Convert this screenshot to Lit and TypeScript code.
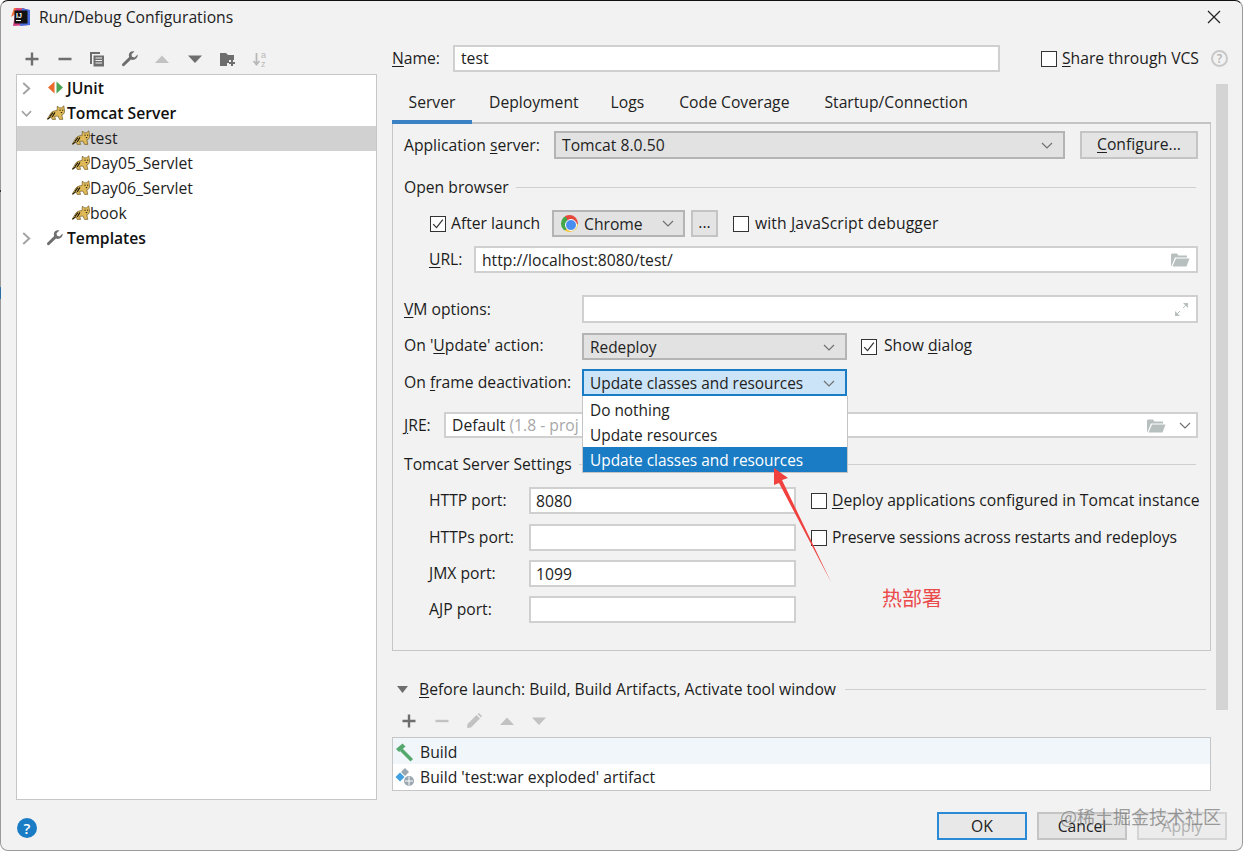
import { LitElement, html, css } from "lit";
import { customElement } from "lit/decorators.js";

const plus = (c: string) => html`<svg class="i16" viewBox="0 0 16 16"><path d="M8 1.5v13M1.5 8h13" stroke=${c} stroke-width="2.4" fill="none"/></svg>`;
const minus = (c: string) => html`<svg class="i16" viewBox="0 0 16 16"><path d="M1.5 8h13" stroke=${c} stroke-width="2.4" fill="none"/></svg>`;
const up = (c: string) => html`<svg class="i16" viewBox="0 0 16 16"><path d="M1 12 8 4.5 15 12Z" fill=${c}/></svg>`;
const down = (c: string) => html`<svg class="i16" viewBox="0 0 16 16"><path d="M1 4.5 8 12 15 4.5Z" fill=${c}/></svg>`;
const wrench = (c: string) => html`<svg class="i16" viewBox="0 0 16 16"><path d="M15.6 3.6 12.6 6.4 10 5.8 9.5 3.2 12.4.6C10 -.4 6.9 1 6.8 4c0 .8.1 1.5.4 2L.6 12.4c-.8.9-.8 1.6-.2 2.3.7.7 1.5.7 2.3-.1L9 8.6c3.5 1.2 7.2-1.4 6.6-5Z" fill=${c}/></svg>`;
const chev = html`<svg class="chev" viewBox="0 0 12 7"><path d="M1 1 6 6 11 1" stroke="#707070" stroke-width="1.2" fill="none"/></svg>`;
const folder = html`<svg class="folder" viewBox="0 0 20 15"><path d="M1 14V2.5L2 1.5H7L8.5 3.5H17V5.5H5L1.5 14Z M2.5 14.5 6 6.5H19.5L16.5 14.5Z" fill="#b8bfbf"/></svg>`;
const check = (on: boolean) => html`<span class="cb">${on ? html`<svg viewBox="0 0 16 16"><path d="M2.5 8.2 6.3 12.2 13.5 3" stroke="#333" stroke-width="1.4" fill="none"/></svg>` : ""}</span>`;
const cat = html`<svg class="cat" viewBox="0 0 18 15">
  <path d="M10.4 1 12.2 2.8H14.6L16.8 .8 17.6 6C17.6 8.8 16 9.6 14.8 9.8L15.8 14.4H12.6L10.8 11 7.6 11.4 8.6 14.4H5.2L4 11.8 0 14.6 3 9.4C4.4 6.6 7.2 5.6 10 5.6Z" fill="#e0ba58" stroke="#5a4618" stroke-width=".6"/>
  <path d="M3 11.4 6 7.6M5.2 12 8 7.4M.8 14.2 3.4 11.8" stroke="#1d1809" stroke-width="1.1" fill="none"/>
  <path d="M12.4 5.2h1.3M15 5.2h1.2M13.8 7.6h1.4" stroke="#1d1809" stroke-width="1"/>
</svg>`;
const treeChevR = html`<svg class="tc" viewBox="0 0 10 12"><path d="M2 1 7.5 6 2 11" stroke="#a3a3a3" stroke-width="1.8" fill="none"/></svg>`;
const treeChevD = html`<svg class="tc" viewBox="0 0 12 10"><path d="M1 2.5 6 7.5 11 2.5" stroke="#a3a3a3" stroke-width="1.8" fill="none"/></svg>`;

@customElement("app-root")
export class AppRoot extends LitElement {
  static styles = css`
    :host { display: block; width: 1244px; height: 852px; background: #fff; overflow: hidden; position: relative;
      font-family: "Open Sans", "Noto Sans CJK SC", sans-serif; font-size: 15.7px; color: #1c1c1c; }
    * { box-sizing: border-box; }
    u { text-underline-offset: 2px; text-decoration-thickness: 1px; }
    .dialog { position: relative; width: 1243px; height: 851px; background: #f2f2f2;
      border: 1px solid #9a9a9a; border-top: 1px solid #111; border-radius: 8px; display: flex; flex-direction: column; overflow: hidden; }
    .title { height: 33px; flex: none; display: flex; align-items: center; padding: 0 21px 2px 9px; gap: 8px; color: #222; }
    .title .t { flex: 1; }
    .logo { width: 21px; height: 20px; flex: none; }
    .close { width: 14px; height: 14px; flex: none; }
    .body { flex: 1; display: flex; padding-left: 15px; }
    .left { width: 361px; flex: none; display: flex; flex-direction: column; padding-top: 10px; }
    .tb { height: 30px; flex: none; display: flex; align-items: center; padding-left: 8px; }
    .tb > span { width: 32.6px; display: flex; justify-content: flex-start; }
    .i16 { width: 16px; height: 16px; display: block; }
    .tree { height: 726px; flex: none; background: #fff; border: 1px solid #c6c6c6; padding-top: 1px; }
    .node { height: 25px; display: flex; align-items: center; position: relative; padding-left: 50px; padding-bottom: 2px; font-weight: 600; color: #111; }
    .node.child { padding-left: 55px; font-weight: 400; color: #222; }
    .node.sel { background: #d1d1d1; }
    .tc { position: absolute; left: 4px; top: 6px; width: 11px; height: 13px; }
    .cat { width: 18px; height: 15px; flex: none; }
    .node .lead { width: 18px; height: 15px; flex: none; margin-right: 2px; margin-left: -20px; }
    .node.top .cat { margin-left: -20px; margin-right: 2px; }
    .help { width: 20px; height: 20px; border-radius: 50%; background: #1a7cc4; color: #fff; display: flex; align-items: center; justify-content: center;
      font-size: 15px; font-weight: 600; margin: 18px 0 0 1px; }
    .right { margin-left: 15px; width: 836px; flex: none; display: flex; flex-direction: column; padding-top: 11px; }
    .namerow { height: 27px; display: flex; align-items: center; flex: none; }
    .namerow .lb { width: 61px; flex: none; padding-bottom: 2px; }
    .namerow .input { width: 547px; flex: none; padding-bottom: 1px; }
    .share { display: flex; align-items: center; margin-left: 41px; gap: 5px; white-space: nowrap; }
    .share > span:last-child { padding-bottom: 2px; }
    .q { width: 17px; height: 17px; margin-left: 12px; flex: none; border: 2px solid #c8c8c8; border-radius: 50%; color: #b4b4b4; font-size: 12px; font-weight: 600; display: flex; align-items: center; justify-content: center; }
    .main { margin-top: 12px; display: grid; grid-template-columns: 819px 12px; column-gap: 5px; align-items: start; }
    .scroll { grid-column: 2; grid-row: 1; height: 626px; background: #d4d4d4; }
    .content { grid-column: 1; grid-row: 1; display: flex; flex-direction: column; }
    .tabs { height: 40px; display: flex; border-bottom: 2px solid #c4c4c4; }
    .tab { display: flex; align-items: center; height: 36px; padding: 0 16px; color: #222; white-space: nowrap; }
    .tab.on { width: 80px; justify-content: center; padding: 0; height: 40px; border-bottom: 4px solid #3a82c4; }
    .tab.first { padding-left: 17px; }
    .tab.wide { padding-right: 19px; }
    .panel { height: 527px; border: 1px solid #c6c6c6; border-top: 0; padding: 7px 12px 0 11px; display: flex; flex-direction: column; }
    .row { display: flex; align-items: center; flex: none; height: 27px; white-space: nowrap; }
    .r1 { height: 28px; }
    .r2, .r9 { height: 22px; }
    .r2 { margin-top: 17px; } .r3 { margin-top: 12px; padding-left: 26px; }
    .r4 { margin-top: 9px; padding-left: 25px; } .r5 { margin-top: 22px; height: 28px; }
    .r6 { margin-top: 10px; } .r7 { margin-top: 9px; } .r8 { margin-top: 16px; height: 26px; }
    .r9 { margin-top: 15px; } .r10 { margin-top: 12px; padding-left: 25px; }
    .r11 { margin-top: 10px; padding-left: 25px; } .r12, .r13 { margin-top: 9px; padding-left: 25px; }
    .lb1 { width: 150px; flex: none; } .lb4 { width: 45px; flex: none; padding-bottom: 1px; } .lb5 { width: 178px; flex: none; padding-bottom: 1px; } .lb8 { width: 40px; flex: none; } .lb10 { width: 100px; flex: none; padding-bottom: 1px; }
    .r6 .lb5 { padding-bottom: 3px; }
    .input { height: 100%; background: #fff; border: 2px solid #d0d0d0; display: flex; align-items: center; padding: 0 6px; color: #222; flex: 1; min-width: 0; justify-content: space-between; }
    .input.w { flex: none; width: 267px; padding-left: 5px; }
    .muted { color: #a8a8a8; }
    .combo { height: 100%; background: #e2e2e2; border: 2px solid #b4b4b4; display: flex; align-items: center; justify-content: space-between; padding: 0 10px 0 6px; flex: none; color: #222; }
    .combo.srv { width: 511px; }
    .combo.upd { width: 265px; font-size: 15.4px; padding-top: 1px; }
    .combo.focus { background: #cce4f7; border-color: #1a7cc4; }
    .chev { width: 12px; height: 7px; flex: none; }
    .btn { background: #e4e4e4; border: 2px solid #c4c4c4; display: flex; align-items: center; justify-content: center; color: #222; flex: none; height: 100%; }
    .btn.conf { width: 118px; margin-left: 15px; padding-bottom: 2px; }
    .btn.dots { width: 27px; margin-left: 6px; padding-bottom: 4px; }
    .sep { display: flex; align-items: center; gap: 7px; }
    .sep i { flex: 1; height: 1px; background: #cfcfcf; margin-right: 2px; }
    .cb { width: 16px; height: 16px; border: 1.5px solid #333; background: #fff; flex: none; display: block; }
    .cb svg { width: 100%; height: 100%; display: block; }
    .chrome { width: 17px; height: 17px; border-radius: 50%; flex: none; position: relative; margin-right: 6px;
      background: conic-gradient(from -30deg, #e8483c 0 120deg, #f7c52e 120deg 240deg, #45a64a 240deg 360deg); }
    .chrome::after { content: ""; position: absolute; left: 3.5px; top: 3.5px; background: #4a8df0; border-radius: 50%; border: 1px solid #fff; width: 10px; height: 10px; }
    .cname { display: flex; align-items: center; flex: 1; }
    .browser { width: 133px; margin-left: 13px; padding: 0 9px 0 7px; }
    .jsl { margin-left: 5px; width: 88px; flex: none; padding-bottom: 1px; }
    .checkcol { display: flex; align-items: center; gap: 5px; margin-left: 15px; white-space: nowrap; }
    .checkcol > span:last-child { padding-bottom: 2px; }
    .r3 .checkcol { gap: 6px; }
    .r3 .checkcol > span:last-child { letter-spacing: .12px; }
    .r6 .checkcol { margin-left: 14px; gap: 7px; }
    .r6 .checkcol > span:last-child { padding-bottom: 3px; }
    .tight { letter-spacing: -.1px; }
    .folder { width: 20px; height: 15px; flex: none; }
    .expand { width: 15px; height: 15px; margin-right: 1px; }
    .jre { gap: 13px; padding-right: 5px; }
    .jre .sp { flex: 1; }
    .bl { margin-top: 27px; height: 22px; display: flex; align-items: center; padding-left: 5px; white-space: nowrap; }
    .bl .tri { width: 11px; height: 7px; margin-right: 11px; flex: none; }
    .bl i { flex: 1; height: 1px; background: #cfcfcf; margin: 0 5px 0 9px; }
    .tb2 { height: 25px; margin-top: 8px; padding-left: 9px; display: flex; align-items: center; }
    .tb2 > span { width: 32.5px; }
    .list { margin-top: 4px; height: 54px; background: #fff; border: 1px solid #c6c6c6; }
    .li { height: 26px; display: flex; align-items: center; gap: 5px; padding-left: 2px; color: #222; }
    .li.a { background: #f0f6fa; padding-top: 1px; }
    .li svg { width: 20px; height: 20px; flex: none; }
    .foot { margin-top: 21px; height: 28px; display: flex; justify-content: flex-end; gap: 10px; padding-right: 1px; flex: none; }
    .foot .btn { width: 90px; }
    .ok { border-color: #2b8ad6 !important; background: #e8e8e8; }
    .dim { color: #b0b0b0; background: #ececec !important; border-color: #d4d4d4 !important; }
    .popup { position: absolute; left: 581px; top: 395px; width: 266px; height: 77px; background: #fff; border: 1px solid #c4c4c4; border-top: 0; font-size: 15.4px; padding-top: 1px; }
    .popup div { height: 25px; display: flex; align-items: center; padding: 1px 0 0 7px; color: #222; }
    .popup div.sel { background: #1a7cc4; color: #fff; }
    .arrow { position: absolute; left: 759px; top: 454px; width: 80px; height: 130px; pointer-events: none; }
    .note { position: absolute; left: 881px; top: 582px; font-family: "Noto Sans CJK SC", sans-serif; font-size: 20px; line-height: 30px; color: #ea4a4a; }
    .mark { position: absolute; left: 1059px; top: 802px; font-family: "Noto Sans CJK SC", sans-serif; font-size: 18px; line-height: 26px; color: rgba(120,120,120,.72); white-space: nowrap; }
    .peek1, .peek2 { position: absolute; left: 0; width: 1px; }
    .peek1 { top: 190px; height: 2px; background: #333; }
    .peek2 { top: 287px; height: 12px; background: #2a6fa8; }
  `;

  render() {
    return html`<div class="dialog">
      <div class="title">
        <svg class="logo" viewBox="0 0 21 20">
          <path d="M1 10 4 1H15Z" fill="#f2713c"/><path d="M3 19 6 1 20 3 19 18Z" fill="#d43d82"/><path d="M12 1 20 3 20 18 10 19Z" fill="#4a6ee0"/>
          <rect x="4.5" y="3.5" width="13" height="13" fill="#111"/>
          <text x="6" y="10.5" font-size="7" font-weight="700" fill="#fff" font-family="Liberation Sans">IJ</text>
          <rect x="6" y="13" width="5" height="1" fill="#fff"/>
        </svg>
        <span class="t">Run/Debug Configurations</span>
        <svg class="close" viewBox="0 0 14 14"><path d="M1 1 13 13M13 1 1 13" stroke="#222" stroke-width="1.2"/></svg>
      </div>
      <div class="body">
        <div class="left">
          <div class="tb">
            <span>${plus("#6e6e6e")}</span><span>${minus("#6e6e6e")}</span>
            <span><svg class="i16" viewBox="0 0 16 16"><path d="M1 1h10v2H3v10H1Z" fill="#6e6e6e"/><path d="M4.5 4.5h10.5v11H4.5Z" fill="#6e6e6e"/><path d="M6.5 7h6.5M6.5 9.5h6.5M6.5 12h6.5" stroke="#f2f2f2" stroke-width="1.2"/></svg></span>
            <span>${wrench("#6e6e6e")}</span><span>${up("#c2c2c2")}</span><span>${down("#6e6e6e")}</span>
            <span><svg class="i16" viewBox="0 0 16 16"><path d="M0 2h6l2 2h6v5H9v3H7v3H0Z" fill="#6e6e6e"/><path d="M12 9v6M9 12h6" stroke="#6e6e6e" stroke-width="2"/></svg></span>
            <span><svg class="i16" viewBox="0 0 16 16"><path d="M4.5 2v11M1.5 10l3 3.5 3-3.5" stroke="#b8b8b8" stroke-width="1.8" fill="none"/><text x="9" y="7" font-size="9" fill="#b8b8b8" font-family="Liberation Sans">a</text><text x="9" y="15.5" font-size="9" fill="#b8b8b8" font-family="Liberation Sans">z</text></svg></span>
          </div>
          <div class="tree">
            <div class="node top">${treeChevR}<svg class="lead" viewBox="0 0 18 15"><path d="M7.5 1.5 1 7.5 7.5 13.5Z" fill="#ee6a2c"/><path d="M9.5 1.5 16 7.5 9.5 13.5Z" fill="#4aa552"/></svg>JUnit</div>
            <div class="node top">${treeChevD}${cat}Tomcat Server</div>
            <div class="node child sel">${cat}test</div>
            <div class="node child">${cat}Day05_Servlet</div>
            <div class="node child">${cat}Day06_Servlet</div>
            <div class="node child">${cat}book</div>
            <div class="node top">${treeChevR}<span class="lead">${wrench("#6e6e6e")}</span>Templates</div>
          </div>
          <div class="help">?</div>
        </div>
        <div class="right">
          <div class="namerow">
            <span class="lb"><u>N</u>ame:</span>
            <span class="input">test</span>
            <span class="share">${check(false)}<span><u>S</u>hare through VCS</span></span>
            <span class="q">?</span>
          </div>
          <div class="main">
            <div class="scroll"></div>
            <div class="content">
              <div class="tabs">
                <span class="tab on">Server</span><span class="tab first">Deployment</span><span class="tab wide">Logs</span><span class="tab wide">Code Coverage</span><span class="tab">Startup/Connection</span>
              </div>
              <div class="panel">
                <div class="row r1"><span class="lb1">Application <u>s</u>erver:</span><span class="combo srv">Tomcat 8.0.50${chev}</span><span class="btn conf"><span><u>C</u>onfigure...</span></span></div>
                <div class="row r2 sep"><span>Open browser</span><i></i></div>
                <div class="row r3">${check(true)}<span class="jsl">After launch</span>
                  <span class="combo browser"><span class="cname"><span class="chrome"></span>Chrome</span>${chev}</span>
                  <span class="btn dots">...</span>
                  <span class="checkcol">${check(false)}<span>with <u>J</u>avaScript debugger</span></span>
                </div>
                <div class="row r4"><span class="lb4"><u>U</u>RL:</span><span class="input">http://localhost:8080/test/${folder}</span></div>
                <div class="row r5"><span class="lb5"><u>V</u>M options:</span><span class="input"><span></span>
                  <svg class="expand" viewBox="0 0 15 15"><path d="M9 1h5v5zM1 14v-5l5 5z" fill="#b8bfbf"/><path d="M12 3 9 6M3 12l3-3" stroke="#b8bfbf"/></svg></span></div>
                <div class="row r6"><span class="lb5">On '<u>U</u>pdate' action:</span><span class="combo upd">Redeploy${chev}</span>
                  <span class="checkcol">${check(true)}<span>Show <u>d</u>ialog</span></span></div>
                <div class="row r7"><span class="lb5">On <u>f</u>rame deactivation:</span><span class="combo upd focus">Update classes and resources${chev}</span></div>
                <div class="row r8"><span class="lb8"><u>J</u>RE:</span><span class="input jre"><span>Default <span class="muted">(1.8 - proj</span></span><span class="sp"></span>${folder}${chev}</span></div>
                <div class="row r9 sep"><span>Tomcat Server Settings</span><i></i></div>
                <div class="row r10"><span class="lb10">HTTP port:</span><span class="input w">8080</span><span class="checkcol">${check(false)}<span><u>D</u>eploy applications configured in Tomcat instance</span></span></div>
                <div class="row r11"><span class="lb10">HTTPs port:</span><span class="input w"></span><span class="checkcol">${check(false)}<span class="tight">Preserve sessions across restarts and redeploys</span></span></div>
                <div class="row r12"><span class="lb10">JMX port:</span><span class="input w">1099</span></div>
                <div class="row r13"><span class="lb10">AJP port:</span><span class="input w"></span></div>
              </div>
              <div class="bl">
                <svg class="tri" viewBox="0 0 11 7"><path d="M0 0H11L5.5 7Z" fill="#6e6e6e"/></svg>
                <span><u>B</u>efore launch: Build, Build Artifacts, Activate tool window</span><i></i>
              </div>
              <div class="tb2">
                <span>${plus("#6e6e6e")}</span><span>${minus("#c2c2c2")}</span>
                <span><svg class="i16" viewBox="0 0 16 16"><path d="M1 15 1.5 11 10.5 2 14 5.5 5 14.5ZM11.5 1 13 0 16 3 15 4.5Z" fill="#c2c2c2"/></svg></span>
                <span>${up("#c2c2c2")}</span><span>${down("#c2c2c2")}</span>
              </div>
              <div class="list">
                <div class="li a"><svg viewBox="0 0 20 20"><path d="M1 7 7.5 1.5 10.5 4.5 4 10Z" fill="#54a86c"/><path d="M7.5 6.5 18 17 15.5 19.5 5 9Z" fill="#54a86c"/></svg>Build</div>
                <div class="li"><svg viewBox="0 0 20 20"><path d="M10 1 14 5 10 9 6 5Z" fill="#9aa7b0"/><path d="M5 5.5 9.5 10 5 14.5.5 10Z" fill="#40a0e0"/><circle cx="14" cy="14" r="5" fill="#9aa7b0"/><path d="M10 14h8M14 9.5v9" stroke="#fff" stroke-width="1"/></svg>Build 'test:war exploded' artifact</div>
              </div>
            </div>
          </div>
          <div class="foot">
            <span class="btn ok">OK</span><span class="btn">Cancel</span><span class="btn dim">Apply</span>
          </div>
        </div>
      </div>
      <div class="popup"><div>Do nothing</div><div>Update resources</div><div class="sel">Update classes and resources</div></div>
      <svg class="arrow" viewBox="0 0 80 130"><path d="M14 13 28 23 22 25 71 127 19 28 14 30Z" fill="#f0413f"/></svg>
      <div class="note">热部署</div>
      <div class="mark">@稀土掘金技术社区</div>
    </div>
    <span class="peek1"></span><span class="peek2"></span>`;
  }
}
